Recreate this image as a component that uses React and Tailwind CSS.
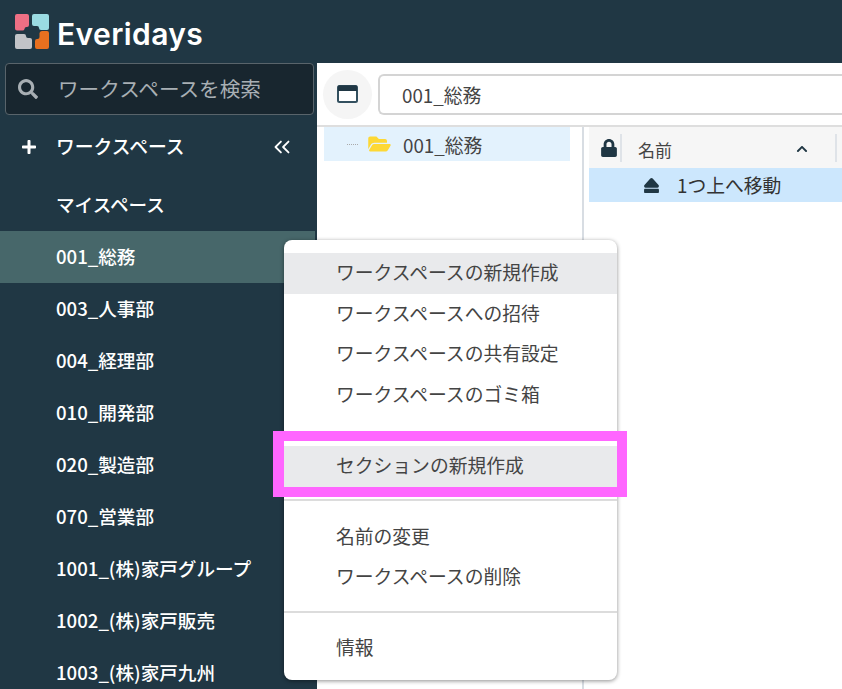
import React from 'react';
import { FaSearch, FaPlus, FaLock, FaEject, FaFolderOpen, FaChevronUp } from 'react-icons/fa';
import { ChevronsLeft } from 'lucide-react';

const spaces = ['001_総務', '003_人事部', '004_経理部', '010_開発部', '020_製造部', '070_営業部', '1001_(株)家戸グループ', '1002_(株)家戸販売', '1003_(株)家戸九州'];

function Logo() {
  return (
    <svg width="36" height="37" viewBox="0 0 36 37" className="shrink-0">
      <path d="M3 1h10a2 2 0 0 1 2 2v9a2 2 0 0 1-2 2h-.5a2 2 0 0 0-2 2 2 2 0 0 1-2 1.500H3a2 2 0 0 1-2-2V3a2 2 0 0 1 2-2z" fill="#ee6f84" />
      <path d="M20 1h13a2 2 0 0 1 2 2v12a2 2 0 0 1-2 2h-6a2 2 0 0 1-2-2 2 2 0 0 0-2-2h-3a2 2 0 0 1-2-2V3a2 2 0 0 1 2-2z" fill="#9adbe2" />
      <path d="M3 21h7a2 2 0 0 1 2 2 2 2 0 0 0 2 2h2a2 2 0 0 1 2 2v7a2 2 0 0 1-2 2H3a2 2 0 0 1-2-2V23a2 2 0 0 1 2-2z" fill="#c2c4c8" />
      <path d="M28 18h5a2 2 0 0 1 2 2v14a2 2 0 0 1-2 2H23a2 2 0 0 1-2-2v-6a2 2 0 0 1 2-2h.5a2 2 0 0 0 2-2v-4a3 3 0 0 1 2.500-2z" fill="#e8701f" />
    </svg>
  );
}

function WindowIcon() {
  return (
    <svg width="21" height="18" viewBox="0 0 21 18">
      <rect x="1" y="1" width="19" height="16" rx="1.5" fill="#fff" stroke="#33505f" strokeWidth="2" />
      <path d="M1 1.5A1 1 0 0 1 2 0.5h17a1 1 0 0 1 1 1V6H1z" fill="#203744" />
    </svg>
  );
}

function MenuItem({ label, active }) {
  return (
    <div className={`h-[40.5px] flex items-center pl-[52px] pb-[2px] text-[18.8px] text-[#444] ${active ? 'bg-[#e9eaec]' : ''}`}>
      {label}
    </div>
  );
}

function App() {
  return (
    <div className="relative w-[842px] h-[689px] overflow-hidden flex flex-col bg-white font-['Noto_Sans_CJK_JP','Noto_Sans',sans-serif]">
      <header className="h-[63px] shrink-0 bg-[#203744] flex items-center gap-[7px] pl-[14px]">
        <Logo />
        <span className="pt-[4px] font-['Inter',sans-serif] text-[30px] font-semibold text-white leading-none tracking-[0.4px]">Everidays</span>
      </header>

      <div className="flex-1 flex min-h-0">
        <aside className="w-[317px] shrink-0 bg-[#203744] pr-[2px] overflow-hidden text-white">
          <div className="ml-[5px] mr-[1px] h-[52px] flex items-center rounded border border-[#59646b] bg-[#18262f] text-[#a8afb4]">
            <FaSearch className="ml-[12px] w-[20px] h-[20px]" />
            <span className="ml-[20px] pb-[2px] text-[20.6px]">ワークスペースを検索</span>
          </div>
          <div className="h-[64px] flex items-center font-medium">
            <FaPlus className="ml-[21px] w-[16px] h-[16px]" />
            <span className="ml-[19px] pb-[2px] text-[18.8px] flex-1">ワークスペース</span>
            <ChevronsLeft className="mr-[20px] w-[26px] h-[26px]" strokeWidth={1.7} />
          </div>
          <div className="h-[52px] flex items-center pl-[56px] pb-[2px] text-[18.6px] font-medium">マイスペース</div>
          {spaces.map((name, i) => (
            <div key={name} className={`h-[52px] flex items-center pl-[56px] pb-[2px] text-[18.6px] font-medium ${i === 0 ? 'bg-[#47676a]' : ''}`}>
              {name}
            </div>
          ))}
        </aside>

        <main className="flex-1 min-w-0 flex flex-col overflow-hidden">
          <div className="h-[64px] shrink-0 border-b-2 border-[#dedede] flex items-center pl-[6px] gap-[6px]">
            <div className="w-[49px] h-[49px] shrink-0 rounded-full bg-[#f5f5f5] flex items-center justify-center">
              <WindowIcon />
            </div>
            <div className="w-[500px] shrink-0 h-[41px] rounded-md border-2 border-r-0 border-[#d4d4d4] flex items-center pl-[22px] pt-[2px] text-[18.8px] text-[#444]">
              001_総務
            </div>
          </div>

          <div className="flex-1 flex min-h-0">
            <div className="w-[267px] shrink-0 border-r-2 border-[#d8dde3] pl-[7px] pr-[12px]">
              <div className="h-[34px] bg-[#e3f2fd] flex items-center text-[18.8px] text-[#444]">
                <span className="ml-[23px] w-[11px] border-t border-dotted border-[#aaa]" />
                <FaFolderOpen className="ml-[10px] w-[23px] h-[20px] text-[#fdd835]" />
                <span className="ml-[12px] pt-[2px]">001_総務</span>
              </div>
            </div>
            <div className="flex-1 min-w-0 pl-[5px]">
              <div className="h-[41px] bg-[#f6f6f6] flex items-center text-[#444]">
                <FaLock className="ml-[12px] w-[16px] h-[18px] text-[#203744]" />
                <span className="ml-[3px] w-[2px] h-[28px] bg-[#dfe3e8]" />
                <span className="ml-[16px] pt-[5px] text-[17px] w-[158px]">名前</span>
                <FaChevronUp className="mt-[2px] w-[12px] h-[12px] text-[#203744]" />
                <span className="ml-[27px] w-[2px] h-[28px] bg-[#dfe3e8]" />
              </div>
              <div className="h-[34px] bg-[#cce7fd] flex items-center text-[18.8px] text-[#333]">
                <FaEject className="ml-[54px] w-[17px] h-[17px] text-[#203744]" />
                <span className="ml-[17px]">1つ上へ移動</span>
              </div>
            </div>
          </div>
        </main>
      </div>

      <div className="absolute left-[284px] top-[240px] w-[333px] h-[440px] bg-white rounded-lg shadow-[0_1px_4px_rgba(0,0,0,0.45)] pt-[13px]">
        <MenuItem label="ワークスペースの新規作成" active />
        <MenuItem label="ワークスペースへの招待" />
        <MenuItem label="ワークスペースの共有設定" />
        <MenuItem label="ワークスペースのゴミ箱" />
        <div className="h-[15px] border-b-2 border-[#dcdcdc] mt-[3px]" />
        <div className="relative mt-[13px]">
          <MenuItem label="セクションの新規作成" active />
          <div className="absolute -left-[11px] -right-[10px] -top-[15px] -bottom-[10px] border-10 border-l-[11px] border-[#ff66ff]" />
        </div>
        <div className="h-[14px] border-b-2 border-[#dcdcdc]" />
        <div className="h-[16px]" />
        <MenuItem label="名前の変更" />
        <MenuItem label="ワークスペースの削除" />
        <div className="h-[15px] border-b-2 border-[#dcdcdc]" />
        <div className="h-[15px]" />
        <MenuItem label="情報" />
      </div>
    </div>
  );
}

export default App;
